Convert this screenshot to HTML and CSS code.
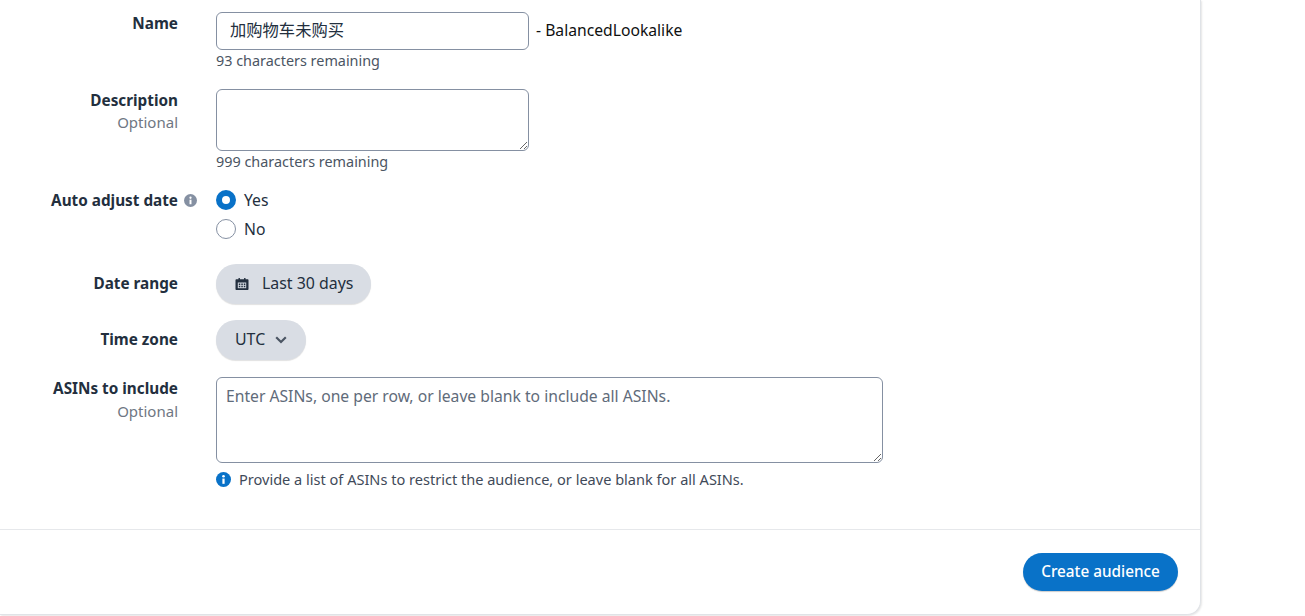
FILE: index.html
```html
<!DOCTYPE html>
<html lang="en">
<head>
  <meta charset="UTF-8">
  <meta name="viewport" content="width=device-width, initial-scale=1.0">
  <title>Create audience</title>
  <link rel="stylesheet" href="styles.css">
</head>
<body>

<section class="card">
  <div class="form">

    <!-- Name -->
    <div class="row row-name">
      <div class="label-col"><div class="label">Name</div></div>
      <div>
        <div class="name-line">
          <input class="input" type="text" value="加购物车未购买">
          <span class="suffix">- BalancedLookalike</span>
        </div>
        <div class="hint">93 characters remaining</div>
      </div>
    </div>

    <!-- Description -->
    <div class="row row-desc">
      <div class="label-col">
        <div class="label">Description</div>
        <div class="optional">Optional</div>
      </div>
      <div>
        <textarea class="textarea textarea-desc"></textarea>
        <div class="hint hint-desc">999 characters remaining</div>
      </div>
    </div>

    <!-- Auto adjust date -->
    <div class="row row-auto">
      <div class="label-col">
        <div class="label label-info">
          Auto adjust date
          <svg class="info-icon" viewBox="0 0 16 16" width="13" height="13">
            <circle cx="8" cy="8" r="8" fill="#8590a2"/>
            <rect x="6.8" y="7" width="2.4" height="5.6" fill="#fff"/>
            <circle cx="8" cy="4.6" r="1.4" fill="#fff"/>
          </svg>
        </div>
      </div>
      <div class="radios">
        <div class="radio-line"><span class="radio radio-on"></span>Yes</div>
        <div class="radio-line"><span class="radio"></span>No</div>
      </div>
    </div>

    <!-- Date range -->
    <div class="row row-date">
      <div class="label-col"><div class="label">Date range</div></div>
      <div>
        <button class="pill pill-date">
          <svg class="pill-icon" viewBox="0 0 14 14" width="14" height="14">
            <path d="M1.5 2.2h2V1h1.4v1.2h4.2V1h1.4v1.2h2c.6 0 1 .4 1 1v8.8c0 .6-.4 1-1 1h-11c-.6 0-1-.4-1-1V3.200c0-.6.4-1 1-1z" fill="#232f3e"/>
            <path d="M2.800 5.500h8.400v5.700H2.800z" fill="#d5dbe3"/>
            <path d="M3.800 6.400h1.500v1.500H3.800zM6.300 6.400h1.500v1.500H6.300zM8.800 6.400h1.500v1.500H8.800zM3.800 8.800h1.500v1.500H3.800zM6.300 8.800h1.500v1.500H6.300zM8.800 8.800h1.500v1.500H8.800z" fill="#232f3e"/>
          </svg>
          Last 30 days
        </button>
      </div>
    </div>

    <!-- Time zone -->
    <div class="row row-zone">
      <div class="label-col"><div class="label">Time zone</div></div>
      <div>
        <button class="pill pill-zone">
          UTC
          <svg class="pill-icon" viewBox="0 0 12 8" width="12" height="8">
            <path d="M1.200 1.300 6 6l4.800-4.700" fill="none" stroke="#4b5563" stroke-width="2.200"/>
          </svg>
        </button>
      </div>
    </div>

    <!-- ASINs -->
    <div class="row row-asins">
      <div class="label-col">
        <div class="label">ASINs to include</div>
        <div class="optional optional-asins">Optional</div>
      </div>
      <div>
        <textarea class="textarea textarea-asins" placeholder="Enter ASINs, one per row, or leave blank to include all ASINs."></textarea>
        <div class="note">
          <svg viewBox="0 0 16 16" width="15" height="15">
            <circle cx="8" cy="8" r="8" fill="#0972c8"/>
            <rect x="6.800" y="7" width="2.400" height="5.600" fill="#fff"/>
            <circle cx="8" cy="4.500" r="1.400" fill="#fff"/>
          </svg>
          Provide a list of ASINs to restrict the audience, or leave blank for all ASINs.
        </div>
      </div>
    </div>

  </div>

  <div class="footer">
    <button class="btn-primary">Create audience</button>
  </div>
</section>

</body>
</html>
```

FILE: styles.css
```css
/* BASE */
* {
  box-sizing: border-box;
  font-family: "Noto Sans", "Noto Sans CJK SC", sans-serif;
}
html, body {
  height: 100%;
}
body {
  margin: 0;
  background: #fff;
  color: #232f3e;
  font-size: 14px;
  overflow: hidden;
}

/* CARD */
.card {
  width: 1201px;
  height: 615px;
  background: #fff;
  border-right: 1px solid #e0e3e7;
  border-bottom: 1px solid #e0e3e7;
  border-bottom-right-radius: 14px;
  box-shadow: 1px 1px 2px rgba(0,0,0,0.1);
}
.form {
  height: 530px;
  padding-top: 12px;
  border-bottom: 1px solid #e6e8eb;
}
.footer {
  display: flex;
  justify-content: flex-end;
  padding: 23px 22px 0 0;
}

/* ROWS */
.row {
  display: grid;
  grid-template-columns: 178px 1fr;
  column-gap: 38px;
}
.row-desc { margin-top: 18px; }
.row-auto { margin-top: 16px; }
.row-date { margin-top: 23px; }
.row-zone { margin-top: 16px; }
.row-asins { margin-top: 17px; }

.label-col {
  text-align: right;
}
.label {
  font-weight: 700;
  font-size: 15.3px;
  line-height: 23px;
  white-space: nowrap;
}
.row-date .label, .row-zone .label {
  line-height: 39px;
}
.optional {
  color: #6f7783;
  font-size: 15px;
  line-height: 20px;
}
.optional-asins { margin-top: 1px; }
.label-info {
  position: relative;
  line-height: 25px;
}
.info-icon {
  position: absolute;
  left: 184px;
  top: 6px;
}

/* INPUTS */
.name-line {
  display: flex;
  align-items: center;
  gap: 7px;
}
.input, .textarea {
  display: block;
  border: 1px solid #8590a2;
  border-radius: 6px;
  background: #fff;
  color: #232f3e;
  outline: none;
}
.input {
  width: 313px;
  height: 38px;
  padding: 0 13px 5px;
  font-size: 16.3px;
}
.suffix {
  color: #0f1111;
  font-size: 15.7px;
  margin-bottom: 3px;
}
.textarea {
  padding: 8px 9px;
  font-size: 15.7px;
  line-height: 20px;
}
.textarea::placeholder {
  color: #5f6b7a;
  opacity: 1;
}
.textarea-desc {
  width: 313px;
  height: 62px;
}
.textarea-asins {
  width: 667px;
  height: 86px;
}
.hint {
  color: #4b5563;
  font-size: 14.4px;
  line-height: 20px;
  margin-top: 1px;
}

/* RADIOS */
.radios {
  display: flex;
  flex-direction: column;
  gap: 5px;
}
.radio-line {
  display: flex;
  align-items: center;
  gap: 8px;
  height: 24px;
  font-size: 15.7px;
}
.radio {
  width: 20px;
  height: 20px;
  border: 1px solid #8590a2;
  border-radius: 50%;
  background: #fff;
}
.radio-on {
  border: 6px solid #0972c8;
}

/* BUTTONS */
button {
  border: none;
  cursor: pointer;
  white-space: nowrap;
}
.pill {
  display: inline-flex;
  align-items: center;
  height: 40px;
  padding: 0 0 3px 19px;
  border-radius: 20px;
  background: #d9dde4;
  box-shadow: 0 1px 1px rgba(0,0,0,0.12);
  color: #232f3e;
  font-size: 15.9px;
}
.pill-icon {
  margin-top: 2px;
}
.pill-date {
  width: 155px;
  gap: 13px;
}
.pill-zone {
  width: 90px;
  gap: 10px;
}
.note {
  display: flex;
  align-items: center;
  gap: 8px;
  margin-top: 6px;
  font-size: 14.55px;
  line-height: 20px;
  color: #3f4a59;
}
.btn-primary {
  width: 155px;
  height: 38px;
  padding: 0 0 2px;
  border-radius: 19px;
  background: #0972c8;
  box-shadow: 0 1px 1px rgba(0,0,0,0.2);
  color: #fff;
  font-size: 15.3px;
  font-weight: 500;
}
```
